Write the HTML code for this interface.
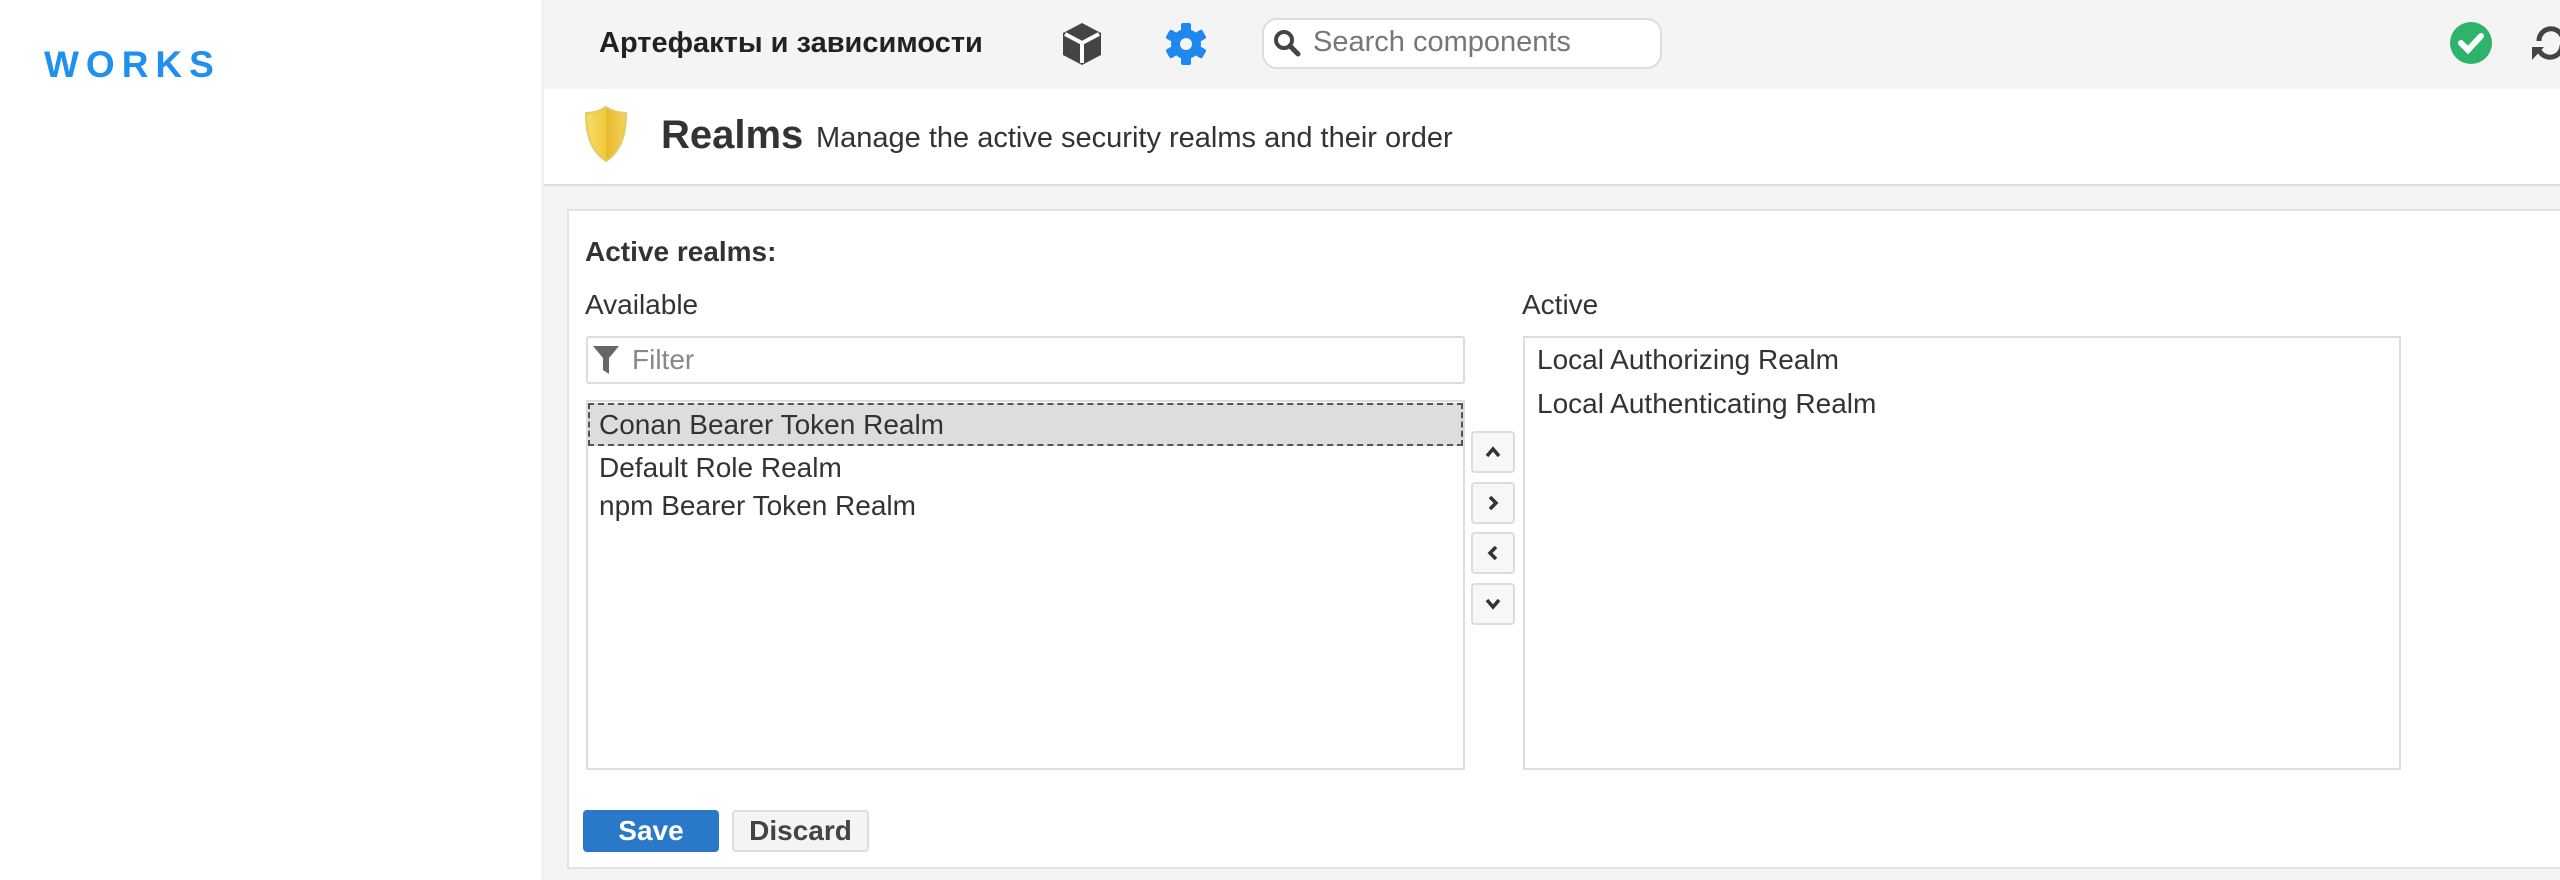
<!DOCTYPE html>
<html><head><meta charset="utf-8"><style>
*{box-sizing:border-box;margin:0;padding:0}
body{width:2560px;height:880px;overflow:hidden;background:#f4f4f4;font-family:"Liberation Sans",Arial,sans-serif;color:#333;position:relative}
.abs{position:absolute}
#side{left:0;top:0;width:543px;height:880px;background:#fff;border-right:1px solid #e8e8e8}
#logo{left:44px;top:44px;font-size:37px;font-weight:bold;color:#1e90ef;letter-spacing:7px}
#top{left:544px;top:0;width:2016px;height:89px;background:#f4f4f4}
#hdr{left:544px;top:89px;width:2016px;height:97px;background:#fff;border-bottom:2px solid #ddd}
.t{white-space:nowrap}
#panel{left:567px;top:209px;width:2010px;height:660px;background:#fff;border:2px solid #e2e2e2}
.box{background:#fff;border:2px solid #ddd}
.item{font-size:28px;color:#333;white-space:nowrap}
.ab{width:44px;height:42px;border:2px solid #ddd;border-radius:4px;background:#f7f7f7;display:flex;align-items:center;justify-content:center}
</style></head><body>
<div id="side" class="abs"></div>
<div id="logo" class="abs">WORKS</div>
<div id="top" class="abs"></div>
<div class="abs t" style="left:599px;top:27px;font-size:29px;font-weight:bold;color:#222">Артефакты и зависимости</div>
<svg class="abs" style="left:1060px;top:21px" width="44" height="46" viewBox="0 0 44 46"><path d="M22 2 L41 12 L41 34 L22 44 L3 34 L3 12 Z" fill="#444"/><path d="M5 13 L22 22 L39 13" stroke="#fff" stroke-width="4" fill="none"/><path d="M22 22 V42" stroke="#fff" stroke-width="4"/><path d="M24 24 L39 16 L39 32 L24 40Z" fill="#444"/></svg>
<svg class="abs" style="left:1164px;top:21px" width="44" height="46" viewBox="-22 -23 44 46"><g fill="#1e88ef"><circle r="15"/><rect x="-5" y="-21" width="10" height="42" rx="2"/><rect x="-5" y="-21" width="10" height="42" rx="2" transform="rotate(60)"/><rect x="-5" y="-21" width="10" height="42" rx="2" transform="rotate(120)"/></g><circle r="6" fill="#f4f4f4"/></svg>
<div class="abs" style="left:1262px;top:18px;width:400px;height:51px;background:#fff;border:2px solid #ddd;border-radius:15px"></div>
<svg class="abs" style="left:1272px;top:28px" width="30" height="30" viewBox="0 0 30 30"><circle cx="12" cy="12" r="8" stroke="#444" stroke-width="4" fill="none"/><path d="M18 18 L26 26" stroke="#444" stroke-width="5" stroke-linecap="round"/></svg>
<div class="abs t" style="left:1313px;top:26px;font-size:29px;color:#777">Search components</div>
<svg class="abs" style="left:2449px;top:21px" width="44" height="44" viewBox="0 0 44 44"><circle cx="22" cy="22" r="21" fill="#2db36a"/><path d="M12 22 L19 29 L32 15" stroke="#fff" stroke-width="6" fill="none" stroke-linecap="round"/></svg>
<svg class="abs" style="left:2530px;top:22px" width="40" height="42" viewBox="0 0 40 42"><path d="M9 19 A12 12 0 0 1 32 14" stroke="#444" stroke-width="5" fill="none"/><path d="M32 23 A12 12 0 0 1 9 28" stroke="#444" stroke-width="5" fill="none"/><path d="M2 25 L14 25 L2 38Z" fill="#444"/></svg>
<div id="hdr" class="abs"></div>
<svg class="abs" style="left:583px;top:105px" width="46" height="58" viewBox="0 0 46 58"><defs><linearGradient id="g" x1="0" x2="1"><stop offset="0" stop-color="#f7dc6a"/><stop offset="0.5" stop-color="#f0c93a"/><stop offset="0.5" stop-color="#e7b92a"/><stop offset="1" stop-color="#f3d45a"/></linearGradient></defs><path d="M23 2 C17 6 10 8 3 8 C3 30 8 46 23 56 C38 46 43 30 43 8 C36 8 29 6 23 2Z" fill="url(#g)" stroke="#e6c867" stroke-width="2"/></svg>
<div class="abs t" style="left:661px;top:113px;font-size:40px;font-weight:bold;color:#333">Realms</div>
<div class="abs t" style="left:816px;top:122px;font-size:29px;color:#333">Manage the active security realms and their order</div>
<div id="panel" class="abs"></div>
<div class="abs t" style="left:585px;top:236px;font-size:28px;font-weight:bold;color:#333">Active realms:</div>
<div class="abs t" style="left:585px;top:289px;font-size:28px">Available</div>
<div class="abs t" style="left:1522px;top:289px;font-size:28px">Active</div>
<div class="abs box" style="left:586px;top:336px;width:879px;height:48px;border-radius:3px"></div>
<svg class="abs" style="left:592px;top:344px" width="28" height="32" viewBox="0 0 28 32"><path d="M1 2 H27 L17 14 V30 L11 26 V14Z" fill="#666"/></svg>
<div class="abs t" style="left:632px;top:344px;font-size:28px;color:#888">Filter</div>
<div class="abs box" style="left:586px;top:400px;width:879px;height:370px"></div>
<div class="abs" style="left:588px;top:403px;width:875px;height:43px;background:#ddd;border:2px dashed #555"></div>
<div class="abs item" style="left:599px;top:409px">Conan Bearer Token Realm</div>
<div class="abs item" style="left:599px;top:452px">Default Role Realm</div>
<div class="abs item" style="left:599px;top:490px">npm Bearer Token Realm</div>
<div class="abs ab" style="left:1471px;top:431px"><svg width="16" height="12" viewBox="0 0 16 12"><path d="M2 10 L8 3 L14 10" stroke="#333" stroke-width="3.5" fill="none"/></svg></div>
<div class="abs ab" style="left:1471px;top:482px"><svg width="12" height="16" viewBox="0 0 12 16"><path d="M3 2 L9 8 L3 14" stroke="#333" stroke-width="3.5" fill="none"/></svg></div>
<div class="abs ab" style="left:1471px;top:532px"><svg width="12" height="16" viewBox="0 0 12 16"><path d="M9 2 L3 8 L9 14" stroke="#333" stroke-width="3.5" fill="none"/></svg></div>
<div class="abs ab" style="left:1471px;top:583px"><svg width="16" height="12" viewBox="0 0 16 12"><path d="M2 2 L8 9 L14 2" stroke="#333" stroke-width="3.5" fill="none"/></svg></div>
<div class="abs box" style="left:1523px;top:336px;width:878px;height:434px"></div>
<div class="abs item" style="left:1537px;top:344px">Local Authorizing Realm</div>
<div class="abs item" style="left:1537px;top:388px">Local Authenticating Realm</div>
<div class="abs" style="left:583px;top:810px;width:136px;height:42px;background:#2a78c8;border-radius:4px;color:#fff;font-size:28px;font-weight:bold;text-align:center;line-height:42px">Save</div>
<div class="abs" style="left:732px;top:810px;width:137px;height:42px;background:#f4f4f4;border:2px solid #ddd;border-radius:4px;color:#444;font-size:28px;font-weight:bold;text-align:center;line-height:38px">Discard</div>
</body></html>
